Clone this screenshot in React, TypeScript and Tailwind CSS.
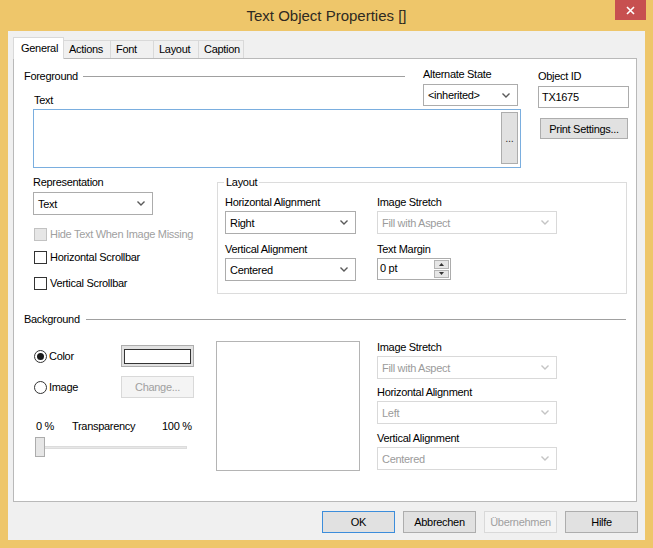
import React from "react";

const font = "font-['Liberation_Sans',Arial,sans-serif]";

function Chevron({ disabled }: { disabled?: boolean }) {
  return (
    <svg width="8" height="5" viewBox="0 0 8 5" className="shrink-0">
      <polyline
        points="0.5,0.5 4,4 7.5,0.5"
        fill="none"
        stroke={disabled ? "#c4c4c4" : "#5a5a5a"}
        strokeWidth="1.4"
      />
    </svg>
  );
}

function Select({ value, w, h = "h-[23px]", disabled }: { value: string; w: string; h?: string; disabled?: boolean }) {
  return (
    <div
      className={`${w} ${h} flex items-center justify-between pl-[4px] pr-[7px] border bg-white ${
        disabled ? "border-[#d9d9d9] text-[#9b9b9b]" : "border-[#acacac] text-black"
      }`}
    >
      <span className="whitespace-nowrap">{value}</span>
      <Chevron disabled={disabled} />
    </div>
  );
}

function Btn({ label, w, h = "h-[22px]", kind }: { label: string; w: string; h?: string; kind?: "default" | "disabled" }) {
  const look =
    kind === "default"
      ? "border-[#3c8ddb] bg-[#e1e1e1] text-black"
      : kind === "disabled"
      ? "border-[#d9d9d9] bg-[#f4f4f4] text-[#a0a0a0]"
      : "border-[#adadad] bg-[#e1e1e1] text-black";
  return <div className={`${w} ${h} border ${look} flex items-center justify-center whitespace-nowrap`}>{label}</div>;
}

function Check({ label, disabled }: { label: string; disabled?: boolean }) {
  return (
    <div className="flex items-center h-[14px] whitespace-nowrap">
      <div
        className={`w-[13px] h-[13px] shrink-0 border ${
          disabled ? "border-[#c2c2c2] bg-[#e6e6e6]" : "border-[#333333] bg-white"
        }`}
      />
      <span className={`ml-[3px] ${disabled ? "text-[#a0a0a0]" : ""}`}>{label}</span>
    </div>
  );
}

function Radio({ label, on }: { label: string; on?: boolean }) {
  return (
    <div className="flex items-center">
      <div className="w-[13px] h-[13px] rounded-full border border-[#333333] bg-white flex items-center justify-center">
        {on && <div className="w-[7px] h-[7px] rounded-full bg-[#1a1a1a]" />}
      </div>
      <span className="ml-[2px]">{label}</span>
    </div>
  );
}

function Label({ children, className = "" }: { children: React.ReactNode; className?: string }) {
  return <div className={`h-[14px] leading-[14px] whitespace-nowrap ${className}`}>{children}</div>;
}

const tabs = [
  { label: "General", w: "w-[51px]" },
  { label: "Actions", w: "w-[47px]" },
  { label: "Font", w: "w-[43px]" },
  { label: "Layout", w: "w-[45px]" },
  { label: "Caption", w: "w-[45px]" },
];

export default function App() {
  return (
    <div
      className={`w-[653px] h-[548px] bg-[#eec66a] flex flex-col ${font} text-[11px] leading-[14px] tracking-[-0.3px] text-black`}
    >
      <div className="h-[31px] relative flex items-center justify-center">
        <span className="text-[15px] text-[#2e2a22] tracking-[0px]">Text Object Properties []</span>
        <div className="absolute top-0 right-[7px] w-[31px] h-[20px] bg-[#c75050] flex items-center justify-center">
          <svg width="9" height="9" viewBox="0 0 9 9">
            <path d="M1 1 L8 8 M8 1 L1 8" stroke="#ffffff" strokeWidth="1.6" />
          </svg>
        </div>
      </div>

      <div className="mx-[8px] mb-[8px] flex-1 bg-[#f0f0f0] flex flex-col">
        <div className="mt-[6px] ml-[5px] h-[21px] flex items-end">
          {tabs.map((t, i) =>
            i === 0 ? (
              <div
                key={t.label}
                className={`${t.w} h-[22px] -mb-[1px] relative z-10 bg-white border border-b-0 border-[#d9d9d9] pl-[7px] pt-[3px]`}
              >
                {t.label}
              </div>
            ) : (
              <div
                key={t.label}
                className={`${t.w} h-[18px] bg-[#f0f0f0] border border-b-0 border-l-0 border-[#d9d9d9] pl-[5px] pt-[1px]`}
              >
                {t.label}
              </div>
            )
          )}
        </div>

        <div className="ml-[5px] w-[624px] h-[444px] border border-[#b9b9b9] bg-white flex flex-col">
          {/* Foreground */}
          <div className="mt-[8px] ml-[10px] flex">
            <div className="w-[497px] flex flex-col">
              <div className="flex items-start">
                <div className="w-[381px] flex flex-col">
                  <div className="mt-[2px] flex items-center">
                    <Label>Foreground</Label>
                    <div className="ml-[5px] flex-1 h-px bg-[#a0a0a0]" />
                  </div>
                  <Label className="ml-[10px] mt-[10px]">Text</Label>
                </div>
                <div className="ml-[18px] w-[95px] flex flex-col">
                  <Label>Alternate State</Label>
                  <div className="mt-[3px]">
                    <Select value={"<inherited>"} w="w-[95px]" h="h-[22px]" />
                  </div>
                </div>
              </div>
              <div className="mt-[2px] ml-[9px] w-[488px] h-[59px] border border-[#7aaedf] bg-white flex justify-end pr-[2px] pt-[2px]">
                <div className="w-[17px] h-[52px] bg-[#e1e1e1] border border-[#adadad] flex items-center justify-center text-[#333]">
                  ...
                </div>
              </div>
            </div>
            <div className="ml-[17px] w-[91px] flex flex-col">
              <Label className="mt-[2px]">Object ID</Label>
              <div className="mt-[3px] h-[22px] border border-[#acacac] bg-white pl-[3px] flex items-center">TX1675</div>
              <div className="mt-[10px] ml-[2px]">
                <Btn label="Print Settings..." w="w-[88px]" h="h-[21px]" />
              </div>
            </div>
          </div>

          {/* Representation + Layout */}
          <div className="mt-[7px] ml-[19px] flex items-start">
            <div className="w-[120px] flex flex-col">
              <Label>Representation</Label>
              <div className="mt-[3px]">
                <Select value="Text" w="w-[120px]" />
              </div>
              <div className="mt-[12px] ml-[1px]">
                <Check label="Hide Text When Image Missing" disabled />
              </div>
              <div className="mt-[9px] ml-[1px]">
                <Check label="Horizontal Scrollbar" />
              </div>
              <div className="mt-[12px] ml-[1px]">
                <Check label="Vertical Scrollbar" />
              </div>
            </div>
            <fieldset className="ml-[64px] w-[410px] h-[119px] border border-[#dcdcdc]">
              <legend className="ml-[6px] px-[2px] leading-[14px]">Layout</legend>
              <div className="mt-[6px] ml-[7px] flex">
                <div className="w-[131px] flex flex-col">
                  <Label>Horizontal Alignment</Label>
                  <div className="mt-[2px]">
                    <Select value="Right" w="w-[131px]" />
                  </div>
                  <Label className="mt-[8px]">Vertical Alignment</Label>
                  <div className="mt-[2px]">
                    <Select value="Centered" w="w-[131px]" />
                  </div>
                </div>
                <div className="ml-[21px] w-[180px] flex flex-col">
                  <Label>Image Stretch</Label>
                  <div className="mt-[2px]">
                    <Select value="Fill with Aspect" w="w-[180px]" disabled />
                  </div>
                  <Label className="mt-[8px]">Text Margin</Label>
                  <div className="mt-[2px] w-[74px] h-[22px] border border-[#acacac] bg-white flex">
                    <div className="flex-1 pl-[2px] pt-[2px]">0 pt</div>
                    <div className="w-[17px] flex flex-col gap-[1px] p-[1px]">
                      <div className="flex-1 bg-[#e6e6e6] border border-[#b4b4b4] flex items-center justify-center">
                        <svg width="5" height="3" viewBox="0 0 5 3">
                          <polygon points="0,3 2.5,0 5,3" fill="#333" />
                        </svg>
                      </div>
                      <div className="flex-1 bg-[#e6e6e6] border border-[#b4b4b4] flex items-center justify-center">
                        <svg width="5" height="3" viewBox="0 0 5 3">
                          <polygon points="0,0 2.5,3 5,0" fill="#333" />
                        </svg>
                      </div>
                    </div>
                  </div>
                </div>
              </div>
            </fieldset>
          </div>

          {/* Background */}
          <div className="mt-[18px] ml-[10px] mr-[10px] flex items-center">
            <Label>Background</Label>
            <div className="ml-[6px] flex-1 h-px bg-[#a0a0a0]" />
          </div>

          <div className="mt-[14px] ml-[20px] flex items-start">
            <div className="w-[160px] flex flex-col">
              <div className="mt-[5px] h-[22px] flex items-center justify-between">
                <Radio label="Color" on />
                <div className="w-[73px] h-[22px] border border-[#adadad] bg-[#e1e1e1] flex items-center justify-center">
                  <div className="w-[67px] h-[15px] border border-[#333] bg-white" />
                </div>
              </div>
              <div className="mt-[9px] h-[22px] flex items-center justify-between">
                <Radio label="Image" />
                <Btn label="Change..." w="w-[73px]" kind="disabled" />
              </div>
              <div className="mt-[21px] ml-[2px] flex">
                <Label className="w-[36px]">0 %</Label>
                <Label className="w-[90px]">Transparency</Label>
                <Label>100 %</Label>
              </div>
              <div className="mt-[4px] ml-[1px] h-[20px] relative flex items-center">
                <div className="ml-[1px] w-[151px] h-[3px] bg-[#e7e7e7] border border-[#dcdcdc]" />
                <div className="absolute left-0 top-0 w-[10px] h-[20px] bg-[#e6e6e6] border border-[#acacac]" />
              </div>
            </div>
            <div className="ml-[22px] mt-[1px] w-[144px] h-[130px] border border-[#b4b4b4] bg-white" />
            <div className="ml-[17px] w-[180px] flex flex-col">
              <Label>Image Stretch</Label>
              <div className="mt-[2px]">
                <Select value="Fill with Aspect" w="w-[180px]" disabled />
              </div>
              <Label className="mt-[6px]">Horizontal Alignment</Label>
              <div className="mt-[2px]">
                <Select value="Left" w="w-[180px]" disabled />
              </div>
              <Label className="mt-[7px]">Vertical Alignment</Label>
              <div className="mt-[2px]">
                <Select value="Centered" w="w-[180px]" disabled />
              </div>
            </div>
          </div>
        </div>

        <div className="mt-[9px] mr-[7px] flex justify-end gap-[8px]">
          <Btn label="OK" w="w-[73px]" kind="default" />
          <Btn label="Abbrechen" w="w-[73px]" />
          <Btn label="Übernehmen" w="w-[73px]" kind="disabled" />
          <Btn label="Hilfe" w="w-[73px]" />
        </div>
      </div>
    </div>
  );
}
